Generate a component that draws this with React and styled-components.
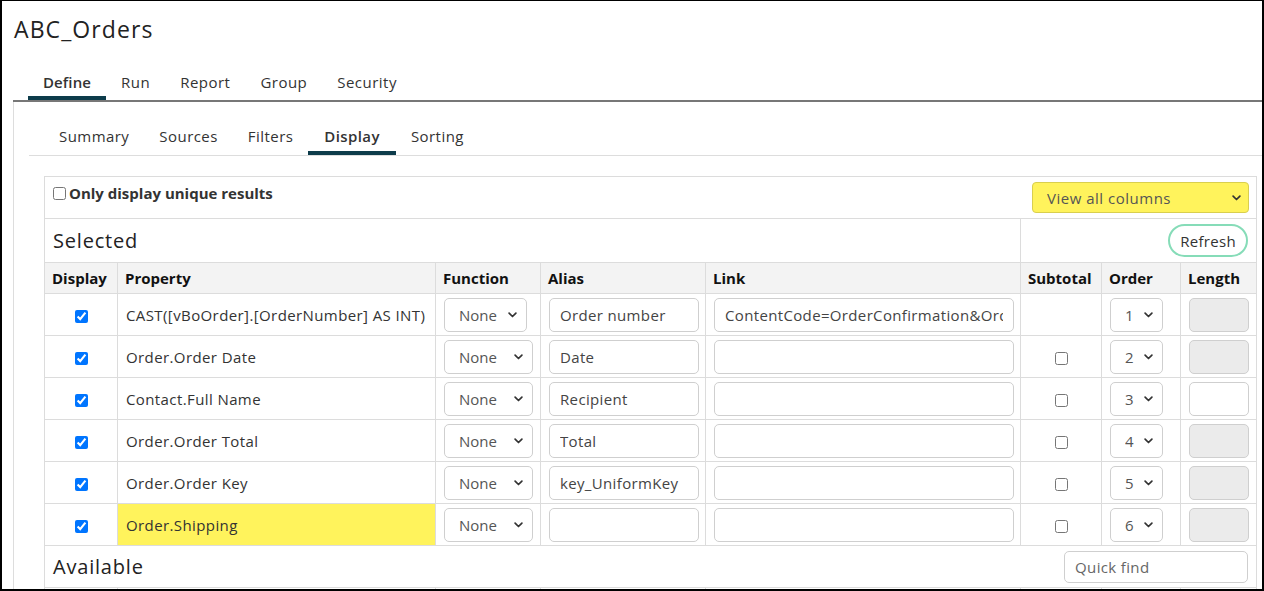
import React from 'react';
import styled, { createGlobalStyle } from 'styled-components';

const Global = createGlobalStyle`
  html, body { margin: 0; padding: 0; background: #fff; }
  body { font-family: "Open Sans", "Noto Sans", sans-serif; color: #333; }
  * { box-sizing: border-box; }
`;

const Frame = styled.div`
  width: 1264px;
  height: 591px;
  overflow: hidden;
  border: 2px solid #000;
  border-top-width: 1px;
  padding: 13px 0 0 11px;
  display: flex;
  flex-direction: column;
`;

const Title = styled.h1`
  margin: 0 0 0 1px;
  font-size: 23px;
  line-height: 30px;
  font-weight: 400;
  letter-spacing: 1.1px;
  color: #222;
`;

const TabBar = styled.div`
  margin-top: 28px;
  display: flex;
  padding-left: 15px;
  border-bottom: 2px solid #777;
`;

const Tab = styled.div`
  padding: 0 15px 4px;
  line-height: 20px;
  font-size: 15px;
  color: #333;
  font-weight: ${p => (p.$active ? 600 : 400)};
  letter-spacing: ${p => (p.$active ? 0.1 : 0.48)}px;
  border-bottom: 4px solid ${p => (p.$active ? '#0d3c4b' : 'transparent')};
`;

const Panel = styled.div`
  flex: 1;
  border-left: 1px solid #ddd;
  padding: 24px 0 0 15px;
`;

const SubTabBar = styled.div`
  display: flex;
  padding-left: 14px;
  border-bottom: 1px solid #ddd;
`;

const SubTab = styled.div`
  padding: 0 ${p => (p.$active ? 16 : 15)}px 5px;
  line-height: 20px;
  font-size: 15px;
  color: #333;
  font-weight: ${p => (p.$active ? 600 : 400)};
  letter-spacing: ${p => (p.$active ? 0.4 : 0.45)}px;
  border-bottom: 4px solid ${p => (p.$active ? '#0d3c4b' : 'transparent')};
`;

const Table = styled.table`
  margin: 20px 0 0 15px;
  width: 1212px;
  border-collapse: collapse;
  table-layout: fixed;
  font-size: 15px;
  color: #333;

  td, th {
    border: 1px solid #dcdcdc;
  }
`;

const Row = styled.tr`
  height: ${p => p.$h || 42}px;
`;

const HeadCell = styled.th`
  background: #f3f3f3;
  text-align: left;
  padding: 0 7px;
  font-weight: 700;
  color: #111;
  white-space: nowrap;
  height: 31px;
`;

const Cell = styled.td`
  padding: 0 8px;
  vertical-align: middle;
  text-align: ${p => (p.$center ? 'center' : 'left')};
  background: ${p => (p.$highlight ? '#fff35c' : 'transparent')};
  white-space: nowrap;
  overflow: hidden;
`;

const PropText = styled.span`
  letter-spacing: 0.4px;
  color: #333;
`;

const TopBar = styled.div`
  display: flex;
  justify-content: space-between;
  align-items: flex-start;
  padding: 5px 0 5px 0;
  height: 41px;
`;

const CheckLabel = styled.label`
  display: flex;
  align-items: center;
  gap: 3px;
  font-weight: 700;
  color: #333;
  line-height: 20px;
  margin-top: 1px;
`;

const Check = styled.input.attrs({ type: 'checkbox' })`
  margin: 0;
  width: 13px;
  height: 13px;
  vertical-align: middle;
`;

const SectionRow = styled.div`
  display: flex;
  justify-content: space-between;
  align-items: center;
`;

const SectionTitle = styled.span`
  font-size: 20px;
  font-weight: 400;
  letter-spacing: 0.8px;
  color: #222;
`;

const RightCell = styled.td`
  padding: 0 8px;
  text-align: right;
  vertical-align: middle;
`;

const PillButton = styled.button`
  width: 80px;
  height: 33px;
  border: 2px solid #86dcb8;
  border-radius: 17px;
  background: #fff;
  font-family: inherit;
  font-size: 15px;
  letter-spacing: 0.3px;
  color: #333;
  padding: 0;
`;

const SelectWrap = styled.span`
  position: relative;
  display: inline-block;
  vertical-align: middle;
`;

const NativeSelect = styled.select`
  appearance: none;
  -webkit-appearance: none;
  width: ${p => p.$w}px;
  height: ${p => p.$h || 34}px;
  border: 1px solid ${p => (p.$yellow ? '#d9cf4e' : '#cfcfcf')};
  border-radius: ${p => (p.$yellow ? 4 : 5)}px;
  background: ${p => (p.$yellow ? '#fff35c' : '#fff')};
  font-family: inherit;
  font-size: 15px;
  letter-spacing: ${p => (p.$yellow ? 0.5 : 0)}px;
  color: #555;
  padding: 0 0 0 14px;
  display: block;
`;

const Chevron = styled.svg`
  position: absolute;
  right: ${p => p.$right || 10}px;
  top: 50%;
  width: 9px;
  height: 6px;
  margin-top: -3px;
  pointer-events: none;
`;

const TextInput = styled.input`
  width: ${p => p.$w}px;
  height: ${p => p.$h || 34}px;
  border: 1px solid #cfcfcf;
  border-radius: 5px;
  background: ${p => (p.disabled ? '#ebebeb' : '#fff')};
  font-family: inherit;
  font-size: 15px;
  letter-spacing: 0.35px;
  color: #444;
  padding: 0 10px;
  display: block;
  &::placeholder { color: #666; }
`;

const Select = ({ w, h, yellow, right, children }) => (
  <SelectWrap>
    <NativeSelect $w={w} $h={h} $yellow={yellow} defaultValue={children}>
      <option>{children}</option>
    </NativeSelect>
    <Chevron $right={right} viewBox="0 0 9 6">
      <path d="M1.1 1.1 L4.5 4.5 L7.9 1.1" fill="none" stroke="#333" strokeWidth="1.7" strokeLinecap="round" strokeLinejoin="round" />
    </Chevron>
  </SelectWrap>
);

const rows = [
  { prop: 'CAST([vBoOrder].[OrderNumber] AS INT)', alias: 'Order number', link: 'ContentCode=OrderConfirmation&OrderNumber={0}', sub: false, order: 1, lenEnabled: false, narrow: true },
  { prop: 'Order.Order Date', alias: 'Date', link: '', sub: true, order: 2, lenEnabled: false },
  { prop: 'Contact.Full Name', alias: 'Recipient', link: '', sub: true, order: 3, lenEnabled: true },
  { prop: 'Order.Order Total', alias: 'Total', link: '', sub: true, order: 4, lenEnabled: false },
  { prop: 'Order.Order Key', alias: 'key_UniformKey', link: '', sub: true, order: 5, lenEnabled: false },
  { prop: 'Order.Shipping', alias: '', link: '', sub: true, order: 6, lenEnabled: false, highlight: true },
];

export default function App() {
  return (
    <>
      <Global />
      <Frame>
        <Title>ABC_Orders</Title>
        <TabBar>
          <Tab $active>Define</Tab>
          <Tab>Run</Tab>
          <Tab>Report</Tab>
          <Tab>Group</Tab>
          <Tab>Security</Tab>
        </TabBar>
        <Panel>
          <SubTabBar>
            <SubTab style={{ paddingLeft: 16 }}>Summary</SubTab>
            <SubTab>Sources</SubTab>
            <SubTab>Filters</SubTab>
            <SubTab $active>Display</SubTab>
            <SubTab>Sorting</SubTab>
          </SubTabBar>
          <Table>
            <colgroup>
              <col style={{ width: 73 }} />
              <col style={{ width: 318 }} />
              <col style={{ width: 105 }} />
              <col style={{ width: 165 }} />
              <col style={{ width: 315 }} />
              <col style={{ width: 81 }} />
              <col style={{ width: 79 }} />
              <col style={{ width: 76 }} />
            </colgroup>
            <tbody>
              <tr>
                <Cell colSpan={8} style={{ padding: '0 7px 0 8px' }}>
                  <TopBar>
                    <CheckLabel>
                      <Check />
                      Only display unique results
                    </CheckLabel>
                    <Select w={217} h={31} yellow right={8}>View all columns</Select>
                  </TopBar>
                </Cell>
              </tr>
              <Row $h={44}>
                <Cell colSpan={5}>
                  <SectionTitle>Selected</SectionTitle>
                </Cell>
                <RightCell colSpan={3}>
                  <PillButton>Refresh</PillButton>
                </RightCell>
              </Row>
              <tr>
                <HeadCell>Display</HeadCell>
                <HeadCell>Property</HeadCell>
                <HeadCell>Function</HeadCell>
                <HeadCell>Alias</HeadCell>
                <HeadCell>Link</HeadCell>
                <HeadCell>Subtotal</HeadCell>
                <HeadCell>Order</HeadCell>
                <HeadCell>Length</HeadCell>
              </tr>
              {rows.map(r => (
                <Row key={r.order}>
                  <Cell $center>
                    <Check defaultChecked />
                  </Cell>
                  <Cell $highlight={r.highlight}>
                    <PropText>{r.prop}</PropText>
                  </Cell>
                  <Cell>
                    <Select w={r.narrow ? 83 : 89}>None</Select>
                  </Cell>
                  <Cell>
                    <TextInput $w={150} defaultValue={r.alias} />
                  </Cell>
                  <Cell>
                    <TextInput $w={300} defaultValue={r.link} />
                  </Cell>
                  <Cell $center>{r.sub && <Check />}</Cell>
                  <Cell>
                    <Select w={53}>{String(r.order)}</Select>
                  </Cell>
                  <Cell>
                    <TextInput $w={60} disabled={!r.lenEnabled} />
                  </Cell>
                </Row>
              ))}
              <Row>
                <Cell colSpan={8}>
                  <SectionRow>
                    <SectionTitle>Available</SectionTitle>
                    <TextInput $w={184} $h={32} placeholder="Quick find" />
                  </SectionRow>
                </Cell>
              </Row>
              <Row>
                <Cell />
                <Cell />
                <Cell />
                <Cell />
                <Cell />
                <Cell />
                <Cell />
                <Cell />
              </Row>
            </tbody>
          </Table>
        </Panel>
      </Frame>
    </>
  );
}
